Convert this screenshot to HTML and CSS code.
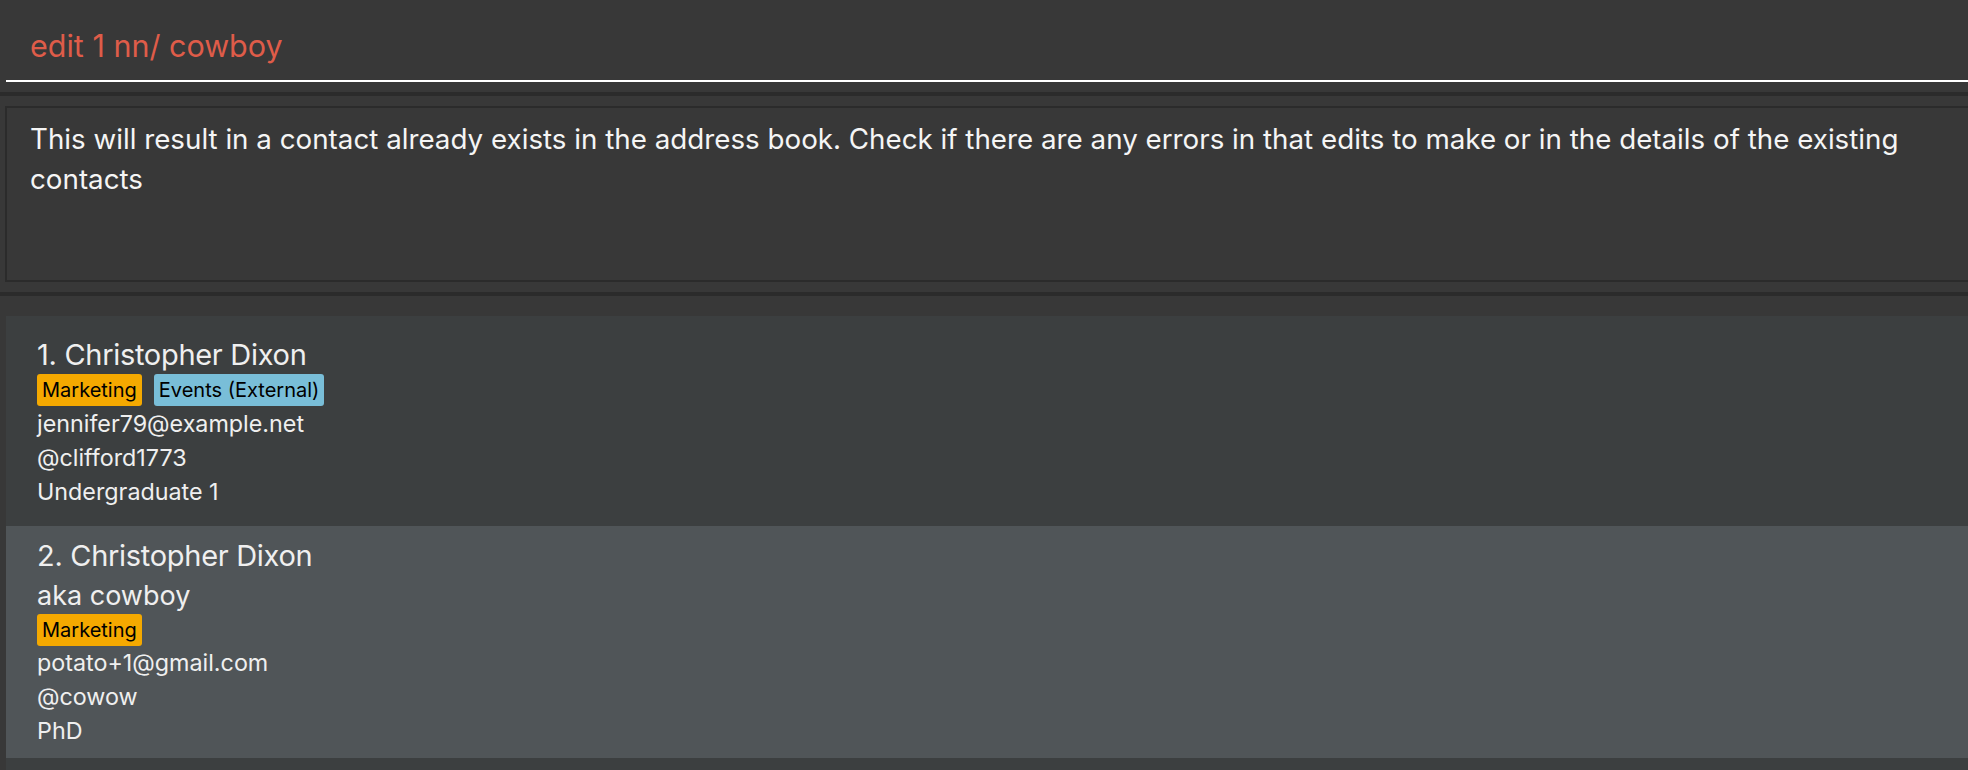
FILE: index.html
```html
<!DOCTYPE html>
<html lang="en">
<head>
<meta charset="utf-8">
<title>Address Book</title>
<link rel="stylesheet" href="styles.css">
</head>
<body>
<div class="app">
  <section class="command-box">
    <div class="command-field error">edit 1 nn/ cowboy</div>
  </section>
  <div class="divider"></div>
  <section class="result-pane">
    <div class="result-display">This will result in a contact already exists in the address book. Check if there are any errors in that edits to make or in the details of the existing contacts</div>
  </section>
  <div class="divider"></div>
  <section class="list-pane">
    <ul class="person-list">
      <li class="person-card even first">
        <div class="name">1. Christopher Dixon</div>
        <div class="tags">
          <span class="tag tag-orange">Marketing</span>
          <span class="tag tag-blue">Events (External)</span>
        </div>
        <div class="detail">jennifer79@example.net</div>
        <div class="detail">@clifford1773</div>
        <div class="detail">Undergraduate 1</div>
      </li>
      <li class="person-card odd">
        <div class="name">2. Christopher Dixon</div>
        <div class="nickname">aka cowboy</div>
        <div class="tags">
          <span class="tag tag-orange">Marketing</span>
        </div>
        <div class="detail">potato+1@gmail.com</div>
        <div class="detail">@cowow</div>
        <div class="detail">PhD</div>
      </li>
      <li class="person-card even empty"></li>
    </ul>
  </section>
</div>
</body>
</html>
```

FILE: styles.css
```css
html, body {
  margin: 0;
  padding: 0;
  background: #383838;
  height: 100%;
  overflow: hidden;
}

.app {
  display: flex;
  flex-direction: column;
  height: 770px;
  font-family: Inter, "Noto Sans", sans-serif;
  color: #ffffff;
}

.command-box {
  height: 92px;
  padding-left: 6px;
  background: #383838;
  box-sizing: border-box;
  flex: none;
}

.command-field {
  height: 82px;
  box-sizing: border-box;
  border-bottom: 2px solid #ffffff;
  padding: 26px 0 0 24px;
  font-size: 30.5px;
  line-height: 40px;
  white-space: nowrap;
}

.command-field.error {
  color: #df5c49;
}

.divider {
  height: 4px;
  background: #2b2b2b;
  flex: none;
}

.result-pane {
  height: 196px;
  padding: 10px 0 10px 5px;
  box-sizing: border-box;
  flex: none;
}

.result-display {
  height: 176px;
  box-sizing: border-box;
  border: 2px solid #2b2b2b;
  border-right: none;
  padding: 11px 40px 0 23px;
  font-size: 27.75px;
  line-height: 40px;
  color: #f5f5f5;
}

.list-pane {
  flex: 1;
  padding: 20px 0 0 6px;
  overflow: hidden;
}

.person-list {
  list-style: none;
  margin: 0;
  padding: 0;
  height: 100%;
}

.person-card {
  padding: 21px 0 0 31px;
  box-sizing: border-box;
  color: #efefef;
}

.person-card.even {
  background: #3c3f40;
  height: 210px;
}

.person-card.odd {
  background: #505558;
  height: 232px;
  padding-top: 12px;
}

.person-card.empty {
  height: 40px;
}

.name {
  font-size: 29px;
  letter-spacing: -0.3px;
  line-height: 36px;
}

.nickname {
  font-size: 27px;
  padding-top: 3px;
  line-height: 37px;
}

.tags {
  display: flex;
  gap: 12px;
  margin: 1px 0 1px;
  height: 32px;
}

.person-card.odd .tags {
  margin: 0;
}

.tag {
  display: inline-flex;
  align-items: center;
  height: 32px;
  padding: 0 5px;
  border-radius: 3px;
  color: #000000;
  font-size: 20px;
}

.tag-orange {
  background: #f5a900;
}

.tag-blue {
  background: #79bed8;
}

.detail {
  font-size: 23.3px;
  line-height: 34px;
}
```
